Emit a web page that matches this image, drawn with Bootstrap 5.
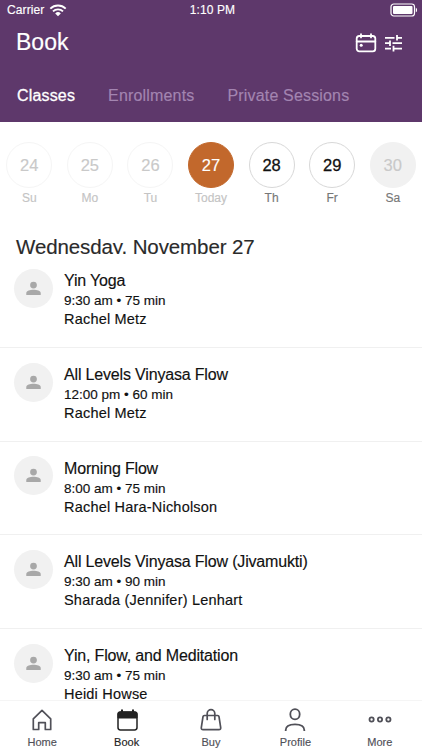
<!DOCTYPE html>
<html lang="en">
<head>
<meta charset="utf-8">
<meta name="viewport" content="width=device-width, initial-scale=1">
<title>Book</title>
<link rel="stylesheet" href="https://cdn.jsdelivr.net/npm/bootstrap@5.3.0/dist/css/bootstrap.min.css">
<style>
body{font-family:"Liberation Sans",Arial,sans-serif;color:#111;background:#fff;-webkit-text-stroke:.15px currentColor}
svg{display:block;flex:none}
.top-area{background:#5e386b;height:122px}
.status{height:20px;font-size:12px;line-height:20px;padding:0 4px 0 7px}
.status .carrier{letter-spacing:.1px}
.status .time{letter-spacing:.1px}
.title-bar{height:45px;padding:0 20px 0 16px}
.title-bar h1{font-size:23px;line-height:45px}
.tabs-row{height:57px;padding:0 17px;gap:33px;font-size:16px;line-height:62px;letter-spacing:.17px}
.tabs-row a{color:#a385b1}
.tabs-row a.active{color:#fff;-webkit-text-stroke:.3px #fff}
.week{margin:0 -1px;height:112px;padding-top:20px}
.day .num{width:46px;height:46px;border:1px solid #f5f5f5;color:#c9c9c9;font-size:16.5px;line-height:20px}
.day .lbl{font-size:12px;line-height:16px;margin-top:2px;color:#c4c4c4}
.day.today .num{background:#c2682c;border-color:#c2682c;color:#fff}
.day.open .num{border-color:#d8d8d8;color:#111;-webkit-text-stroke:.3px #111}
.day.closed .num{background:#f1f1f1;border-color:#f1f1f1}
.day.open .lbl,.day.closed .lbl{color:#777}
.date-head{height:20px;font-size:20.5px;line-height:25px;padding-left:16px;color:#2a2a2a;letter-spacing:-.1px}
.class-row{height:93.75px;padding:14px 14px 0 13.5px;border-bottom:1px solid #f0f0f0}
.avatar{width:39px;height:39px;margin-top:.75px;background:#f1f1f1}
.info{padding-left:11.5px;padding-top:3px}
.info .name{font-size:16px;line-height:20px;letter-spacing:-.17px}
.info .when{font-size:13.5px;line-height:19px}
.info .who{font-size:14.5px;line-height:19px;letter-spacing:.2px}
.tab-bar{height:50px;border-top:1px solid #f5f5f5;font-size:11px;color:#505058}
.tab-bar .icon-box{height:34px;padding-top:7px}
.tab-bar .cap{line-height:15px}
.tab-bar .active{color:#222}
</style>
<script src="https://cdn.jsdelivr.net/npm/bootstrap@5.3.0/dist/js/bootstrap.bundle.min.js"></script>
</head>
<body class="vh-100 overflow-hidden d-flex flex-column">
<svg width="0" height="0" class="d-none"><symbol id="person" viewBox="0 0 16 16"><circle cx="8" cy="4.3" r="3.6"/><path d="M.3 15v-2.1C.3 10.5 4.4 9.4 8 9.4s7.7 1.1 7.7 3.5V15z"/></symbol></svg>

<header class="top-area text-white flex-shrink-0">
  <div class="status d-flex align-items-center">
    <div class="col d-flex align-items-center"><span class="carrier">Carrier</span>
      <svg class="ms-1" width="20" height="14" viewBox="0 0 20 14" fill="none" stroke="#fff" stroke-width="1.9"><path d="M2.3 5.6a11 11 0 0 1 15.4 0M5 8.4a7.1 7.1 0 0 1 10 0"/><path d="M7.2 10.4a4 4 0 0 1 5.6 0L10 13.2z" fill="#fff" stroke="none"/></svg>
    </div>
    <span class="time">1:10 PM</span>
    <div class="col d-flex justify-content-end">
      <svg width="28" height="14" viewBox="0 0 28 14"><rect x="1" y="1" width="23.5" height="12" rx="2.8" fill="none" stroke="#fff" stroke-width="1.2"/><rect x="3" y="3" width="19.5" height="8" rx="1" fill="#fff"/><path d="M25.8 4.7c1.7.6 1.7 4 0 4.6z" fill="#fff"/></svg>
    </div>
  </div>
  <div class="title-bar d-flex align-items-center justify-content-between">
    <h1 class="m-0 fw-normal">Book</h1>
    <div class="d-flex align-items-center gap-2">
      <svg width="22" height="20" viewBox="0 0 22 20" fill="none" stroke="#fff" stroke-width="1.8" stroke-linecap="round"><rect x="1.7" y="3" width="18.6" height="15.4" rx="2.6"/><path d="M1.7 8.5h18.6M6 1.2v3.2M16 1.2v3.2"/><circle cx="6.2" cy="12.3" r="1.5" fill="#fff" stroke="none"/></svg>
      <svg width="17" height="18" viewBox="0 0 17 18" fill="none" stroke="#fff" stroke-width="1.8"><path d="M0 3.8h9.5M12 3.8h5M12 1v5.6M0 9.2h5M7.5 9.2H17M5 6.4V12M0 14.6h6M8.5 14.6H17M8.5 11.8v5.6"/></svg>
    </div>
  </div>
  <nav class="tabs-row d-flex text-nowrap">
    <a class="active text-decoration-none">Classes</a>
    <a class="text-decoration-none">Enrollments</a>
    <a class="text-decoration-none">Private Sessions</a>
  </nav>
</header>

<section class="week d-flex flex-shrink-0 text-center">
  <div class="day col"><div class="num rounded-circle mx-auto d-flex align-items-center justify-content-center">24</div><div class="lbl">Su</div></div>
  <div class="day col"><div class="num rounded-circle mx-auto d-flex align-items-center justify-content-center">25</div><div class="lbl">Mo</div></div>
  <div class="day col"><div class="num rounded-circle mx-auto d-flex align-items-center justify-content-center">26</div><div class="lbl">Tu</div></div>
  <div class="day today col"><div class="num rounded-circle mx-auto d-flex align-items-center justify-content-center">27</div><div class="lbl">Today</div></div>
  <div class="day open col"><div class="num rounded-circle mx-auto d-flex align-items-center justify-content-center">28</div><div class="lbl">Th</div></div>
  <div class="day open col"><div class="num rounded-circle mx-auto d-flex align-items-center justify-content-center">29</div><div class="lbl">Fr</div></div>
  <div class="day closed col"><div class="num rounded-circle mx-auto d-flex align-items-center justify-content-center">30</div><div class="lbl">Sa</div></div>
</section>

<h2 class="date-head m-0 fw-normal overflow-hidden flex-shrink-0">Wednesday, November 27</h2>

<main class="flex-grow-1 overflow-hidden text-nowrap">
  <div class="class-row d-flex">
    <div class="avatar rounded-circle d-flex align-items-center justify-content-center flex-shrink-0"><svg width="15" height="15" fill="#a8a8a8"><use href="#person"/></svg></div>
    <div class="info"><div class="name">Yin Yoga</div><div class="when">9:30 am • 75 min</div><div class="who">Rachel Metz</div></div>
  </div>
  <div class="class-row d-flex">
    <div class="avatar rounded-circle d-flex align-items-center justify-content-center flex-shrink-0"><svg width="15" height="15" fill="#a8a8a8"><use href="#person"/></svg></div>
    <div class="info"><div class="name">All Levels Vinyasa Flow</div><div class="when">12:00 pm • 60 min</div><div class="who">Rachel Metz</div></div>
  </div>
  <div class="class-row d-flex">
    <div class="avatar rounded-circle d-flex align-items-center justify-content-center flex-shrink-0"><svg width="15" height="15" fill="#a8a8a8"><use href="#person"/></svg></div>
    <div class="info"><div class="name">Morning Flow</div><div class="when">8:00 am • 75 min</div><div class="who">Rachel Hara-Nicholson</div></div>
  </div>
  <div class="class-row d-flex">
    <div class="avatar rounded-circle d-flex align-items-center justify-content-center flex-shrink-0"><svg width="15" height="15" fill="#a8a8a8"><use href="#person"/></svg></div>
    <div class="info"><div class="name">All Levels Vinyasa Flow (Jivamukti)</div><div class="when">9:30 am • 90 min</div><div class="who">Sharada (Jennifer) Lenhart</div></div>
  </div>
  <div class="class-row d-flex">
    <div class="avatar rounded-circle d-flex align-items-center justify-content-center flex-shrink-0"><svg width="15" height="15" fill="#a8a8a8"><use href="#person"/></svg></div>
    <div class="info"><div class="name">Yin, Flow, and Meditation</div><div class="when">9:30 am • 75 min</div><div class="who">Heidi Howse</div></div>
  </div>
</main>

<footer class="tab-bar d-flex flex-shrink-0 bg-white text-center">
  <div class="col"><div class="icon-box"><svg class="mx-auto" width="22" height="24" viewBox="0 0 22 24" fill="none" stroke="currentColor" stroke-width="1.7" stroke-linejoin="round"><path d="M2.3 10.8 11 2.4l8.7 8.4v10.7h-5.4v-6.8H7.7v6.8H2.3z"/></svg></div><div class="cap">Home</div></div>
  <div class="col active"><div class="icon-box"><svg class="mx-auto" width="22" height="24" viewBox="0 0 22 24" fill="none" stroke="currentColor"><rect x="2" y="4" width="19" height="18" rx="2.4" stroke-width="1.5"/><path d="M2 10V6q0-2 2-2h15q2 0 2 2v4z" fill="currentColor"/><path d="M6 1.5v4M17 1.5v4" stroke-width="2"/></svg></div><div class="cap">Book</div></div>
  <div class="col"><div class="icon-box"><svg class="mx-auto" width="24" height="24" viewBox="0 0 24 24" fill="none" stroke="currentColor" stroke-width="1.7" stroke-linejoin="round" stroke-linecap="round"><path d="M5.4 7.5h13.2q1.2 0 1.4 1.2l1.7 11q.2 2-1.8 2H4.1q-2 0-1.8-2l1.7-11q.2-1.2 1.4-1.2z"/><path d="M8.2 11.5V5.5a3.8 3.8 0 0 1 7.6 0v6"/></svg></div><div class="cap">Buy</div></div>
  <div class="col"><div class="icon-box"><svg class="mx-auto" width="24" height="24" viewBox="0 0 24 24" fill="none" stroke="currentColor" stroke-width="1.8"><ellipse cx="12" cy="6.3" rx="4.7" ry="5.1"/><path d="M2.7 23v-.9c0-3.8 3.6-5.8 9.3-5.8s9.3 2 9.3 5.8v.9"/></svg></div><div class="cap">Profile</div></div>
  <div class="col"><div class="icon-box"><svg class="mx-auto" width="24" height="24" viewBox="0 0 24 24" fill="none" stroke="currentColor" stroke-width="1.8"><circle cx="3.6" cy="11.5" r="2.1"/><circle cx="12" cy="11.5" r="2.1"/><circle cx="20.4" cy="11.5" r="2.1"/></svg></div><div class="cap">More</div></div>
</footer>
</body>
</html>
